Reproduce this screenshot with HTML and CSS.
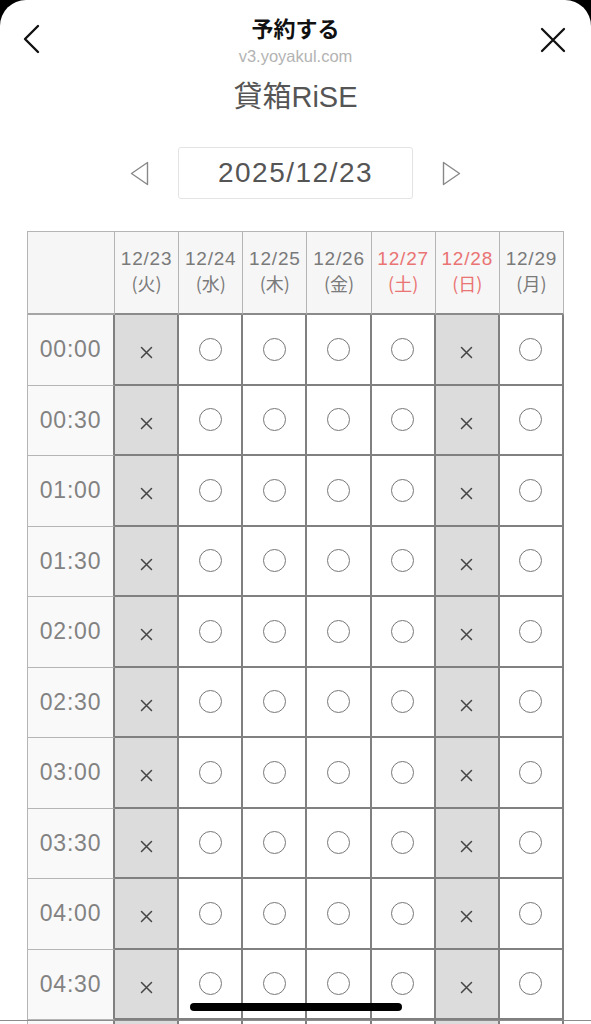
FILE: index.html
```html
<!DOCTYPE html>
<html lang="ja">
<head>
<meta charset="utf-8">
<title>予約する</title>
<link rel="stylesheet" href="styles.css">
</head>
<body>
<div class="sheet">
  <header class="topbar">
    <button class="icon-btn back" aria-label="戻る">
      <svg width="18" height="30" viewBox="0 0 18 30"><path d="M16 2 L3 15 L16 28" fill="none" stroke="#111" stroke-width="2.4" stroke-linecap="round" stroke-linejoin="round"/></svg>
    </button>
    <div class="titles">
      <div class="title">予約する</div>
      <div class="domain">v3.yoyakul.com</div>
    </div>
    <button class="icon-btn close" aria-label="閉じる">
      <svg width="26" height="26" viewBox="0 0 26 26"><path d="M2 2 L24 24 M24 2 L2 24" fill="none" stroke="#111" stroke-width="2.3" stroke-linecap="round"/></svg>
    </button>
  </header>

  <h1 class="shop">貸箱RiSE</h1>

  <div class="datenav">
    <svg class="tri" width="19" height="25" viewBox="0 0 19 25"><path d="M17.5 1.5 L1.5 12.5 L17.5 23.5 Z" fill="none" stroke="#888" stroke-width="1.4" stroke-linejoin="round"/></svg>
    <div class="datebox">2025/12/23</div>
    <svg class="tri" width="19" height="25" viewBox="0 0 19 25"><path d="M1.5 1.5 L17.5 12.5 L1.5 23.5 Z" fill="none" stroke="#888" stroke-width="1.4" stroke-linejoin="round"/></svg>
  </div>

  <div class="grid" id="grid">
    <div class="hcell corner"></div>
    <div class="hcell"><span class="md">12/23</span><span>(火)</span></div>
    <div class="hcell"><span class="md">12/24</span><span>(水)</span></div>
    <div class="hcell"><span class="md">12/25</span><span>(木)</span></div>
    <div class="hcell"><span class="md">12/26</span><span>(金)</span></div>
    <div class="hcell red"><span class="md">12/27</span><span>(土)</span></div>
    <div class="hcell red"><span class="md">12/28</span><span>(日)</span></div>
    <div class="hcell"><span class="md">12/29</span><span>(月)</span></div>
  </div>

  <div class="home-line"></div>
  <div class="home-bar"></div>
</div>
<script src="app.js"></script>
</body>
</html>
```
FILE: app.js
```js
(function () {
  var grid = document.getElementById('grid');
  var times = ['00:00','00:30','01:00','01:30','02:00','02:30','03:00','03:30','04:00','04:30',''];
  var closed = [true, false, false, false, false, true, false];
  var circle = '<span class="circle"></span>';
  var cross = '<svg class="cross" width="13" height="13" viewBox="0 0 13 13"><path d="M1.5 1.5 L11.5 11.5 M11.5 1.5 L1.5 11.5" stroke="#444" stroke-width="1.5" stroke-linecap="round"/></svg>';
  times.forEach(function (t) {
    var tc = document.createElement('div');
    tc.className = 'tcell';
    tc.textContent = t;
    grid.appendChild(tc);
    closed.forEach(function (c) {
      var d = document.createElement('div');
      d.className = 'dcell' + (c ? ' off' : '');
      d.innerHTML = c ? cross : circle;
      grid.appendChild(d);
    });
  });
})();
```
FILE: styles.css
```css
html, body {
  margin: 0;
  padding: 0;
  background: #000;
}
body {
  font-family: "Liberation Sans", "Noto Sans CJK JP", sans-serif;
  height: 1024px;
  overflow: hidden;
}
.sheet {
  background: #fff;
  border-top-left-radius: 26px;
  border-top-right-radius: 26px;
  height: 1024px;
  overflow: hidden;
}
.topbar {
  display: grid;
  grid-template-columns: 80px 1fr 80px;
  align-items: start;
  padding-top: 12px;
}
.icon-btn {
  border: 0;
  background: none;
  padding: 0;
  margin: 0;
  display: flex;
}
.back {
  margin-left: 22px;
  margin-top: 12px;
}
.close {
  justify-self: end;
  margin-right: 25px;
  margin-top: 15px;
}
.titles {
  text-align: center;
}
.title {
  font-family: "Noto Sans CJK JP", sans-serif;
  font-size: 22px;
  font-weight: 700;
  line-height: 30px;
  color: #111;
}
.domain {
  font-family: "Liberation Sans", sans-serif;
  font-size: 16.5px;
  line-height: 20px;
  color: #b3b3b3;
  margin-top: 4px;
}
.shop {
  margin: 12px 0 0;
  text-align: center;
  font-family: "Liberation Sans", "Noto Sans CJK JP", sans-serif;
  font-size: 29px;
  font-weight: 400;
  line-height: 38px;
  color: #555;
}
.datenav {
  display: flex;
  align-items: center;
  justify-content: center;
  gap: 29px;
  margin-top: 31px;
}
.datebox {
  width: 235px;
  height: 52px;
  box-sizing: border-box;
  border: 1px solid #e3e3e3;
  border-radius: 3px;
  display: flex;
  align-items: center;
  justify-content: center;
  font-size: 28px;
  letter-spacing: 1.5px;
  color: #555;
}
.grid {
  margin: 32px 0 0 27px;
  width: 537px;
  display: grid;
  grid-template-columns: 87px repeat(7, 1fr);
  grid-template-rows: 83px;
  grid-auto-rows: 70.5px;
  border-top: 1px solid #b5b5b5;
  border-left: 1px solid #b5b5b5;
  box-sizing: border-box;
}
.hcell {
  background: #f6f6f6;
  border-right: 1px solid #b5b5b5;
  border-bottom: 2px solid #8a8a8a;
  display: flex;
  flex-direction: column;
  align-items: center;
  justify-content: center;
  font-family: "Noto Sans CJK JP", sans-serif;
  font-size: 18px;
  line-height: 25px;
  color: #7a7a7a;
  padding-bottom: 4px;
}
.hcell .md {
  font-family: "Liberation Sans", sans-serif;
  font-size: 19px;
  letter-spacing: 0.8px;
}
.hcell.corner {
  border-bottom: 2px solid #a5a5a5;
}
.hcell:last-child {
  border-right: 2px solid #8a8a8a;
}
.hcell.red {
  color: #ea7373;
}
.tcell {
  background: #f9f9f9;
  border-right: 2px solid #808080;
  border-bottom: 1px solid #b5b5b5;
  display: flex;
  align-items: center;
  justify-content: center;
  font-size: 23px;
  letter-spacing: 0.8px;
  color: #828282;
}
.dcell {
  background: #fff;
  border-right: 2px solid #808080;
  border-bottom: 2px solid #808080;
  display: flex;
  align-items: center;
  justify-content: center;
}
.dcell.off {
  background: #dcdcdc;
}
.circle {
  width: 23px;
  height: 23px;
  box-sizing: border-box;
  border: 1.3px solid #777;
  border-radius: 50%;
}
.cross {
  margin-top: 7px;
}
.home-line {
  position: fixed;
  left: 0;
  right: 0;
  top: 1020px;
  height: 1px;
  background: #8c8c8c;
}
.home-bar {
  position: fixed;
  left: 190px;
  top: 1003px;
  width: 212px;
  height: 8px;
  border-radius: 4px;
  background: #000;
}
```
